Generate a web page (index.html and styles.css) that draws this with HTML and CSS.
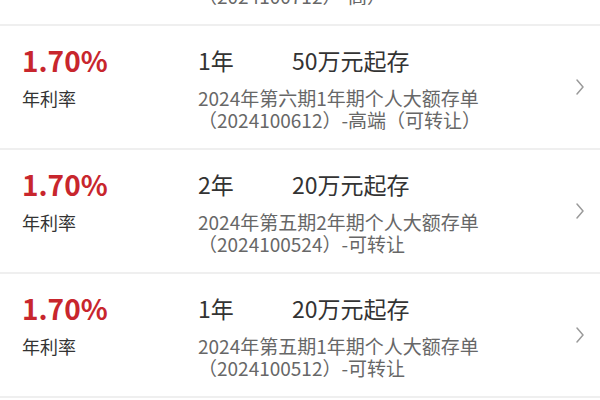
FILE: index.html
```html
<!DOCTYPE html>
<html lang="zh-CN">
<head>
<meta charset="utf-8">
<title>大额存单</title>
<link rel="stylesheet" href="styles.css">
</head>
<body>
<ul class="list">
  <li class="row">
    <div class="rate-col">
      <div class="rate">1.70%</div>
      <div class="rate-label">年利率</div>
    </div>
    <div class="info">
      <div class="title"><span class="term">1年</span><span class="min">50万元起存</span></div>
      <div class="desc">2024年第七期1年期个人大额存单<br>（2024100712）-高）</div>
    </div>
    <svg class="chev" width="10" height="18" viewBox="0 0 10 18"><polyline points="2,2 8,9 2,16" fill="none" stroke="#9a9a9a" stroke-width="1.5" stroke-linecap="round" stroke-linejoin="round"/></svg>
  </li>
  <li class="row">
    <div class="rate-col">
      <div class="rate">1.70%</div>
      <div class="rate-label">年利率</div>
    </div>
    <div class="info">
      <div class="title"><span class="term">1年</span><span class="min">50万元起存</span></div>
      <div class="desc">2024年第六期1年期个人大额存单<br>（2024100612）-高端（可转让）</div>
    </div>
    <svg class="chev" width="10" height="18" viewBox="0 0 10 18"><polyline points="2,2 8,9 2,16" fill="none" stroke="#9a9a9a" stroke-width="1.5" stroke-linecap="round" stroke-linejoin="round"/></svg>
  </li>
  <li class="row">
    <div class="rate-col">
      <div class="rate">1.70%</div>
      <div class="rate-label">年利率</div>
    </div>
    <div class="info">
      <div class="title"><span class="term">2年</span><span class="min">20万元起存</span></div>
      <div class="desc">2024年第五期2年期个人大额存单<br>（2024100524）-可转让</div>
    </div>
    <svg class="chev" width="10" height="18" viewBox="0 0 10 18"><polyline points="2,2 8,9 2,16" fill="none" stroke="#9a9a9a" stroke-width="1.5" stroke-linecap="round" stroke-linejoin="round"/></svg>
  </li>
  <li class="row">
    <div class="rate-col">
      <div class="rate">1.70%</div>
      <div class="rate-label">年利率</div>
    </div>
    <div class="info">
      <div class="title"><span class="term">1年</span><span class="min">20万元起存</span></div>
      <div class="desc">2024年第五期1年期个人大额存单<br>（2024100512）-可转让</div>
    </div>
    <svg class="chev" width="10" height="18" viewBox="0 0 10 18"><polyline points="2,2 8,9 2,16" fill="none" stroke="#9a9a9a" stroke-width="1.5" stroke-linecap="round" stroke-linejoin="round"/></svg>
  </li>
  <li class="row">
    <div class="rate-col">
      <div class="rate">1.70%</div>
      <div class="rate-label">年利率</div>
    </div>
    <div class="info">
      <div class="title"><span class="term">3年</span><span class="min">20万元起存</span></div>
      <div class="desc">2024年第五期3年期个人大额存单<br>（2024100536）-可转让</div>
    </div>
    <svg class="chev" width="10" height="18" viewBox="0 0 10 18"><polyline points="2,2 8,9 2,16" fill="none" stroke="#9a9a9a" stroke-width="1.5" stroke-linecap="round" stroke-linejoin="round"/></svg>
  </li>
</ul>
</body>
</html>
```
FILE: styles.css
```css
html, body {
  margin: 0;
  padding: 0;
  background: #ffffff;
  overflow: hidden;
}
body {
  font-family: "Noto Sans CJK SC", "Noto Sans", sans-serif;
  color: #333333;
}
.list {
  list-style: none;
  margin: -98px 0 0 0;
  padding: 0;
}
.row {
  display: flex;
  align-items: flex-start;
  height: 122px;
  box-sizing: content-box;
  border-bottom: 2px solid #efefef;
  padding-left: 22px;
  padding-right: 17px;
}
.rate-col {
  width: 176px;
  flex: none;
  padding-top: 19px;
}
.rate {
  font-size: 28px;
  line-height: 30px;
  font-weight: 700;
  color: #c8262d;
}
.rate-label {
  margin-top: 12px;
  font-size: 18px;
  line-height: 22px;
  color: #333333;
}
.info {
  flex: 1;
  padding-top: 19px;
}
.title {
  display: flex;
  font-size: 23px;
  line-height: 30px;
  color: #333333;
}
.term {
  width: 94px;
  flex: none;
}
.desc {
  margin-top: 12px;
  font-size: 19px;
  line-height: 22px;
  color: #676767;
}
.chev {
  align-self: center;
  flex: none;
  margin-right: -2px;
}
```
